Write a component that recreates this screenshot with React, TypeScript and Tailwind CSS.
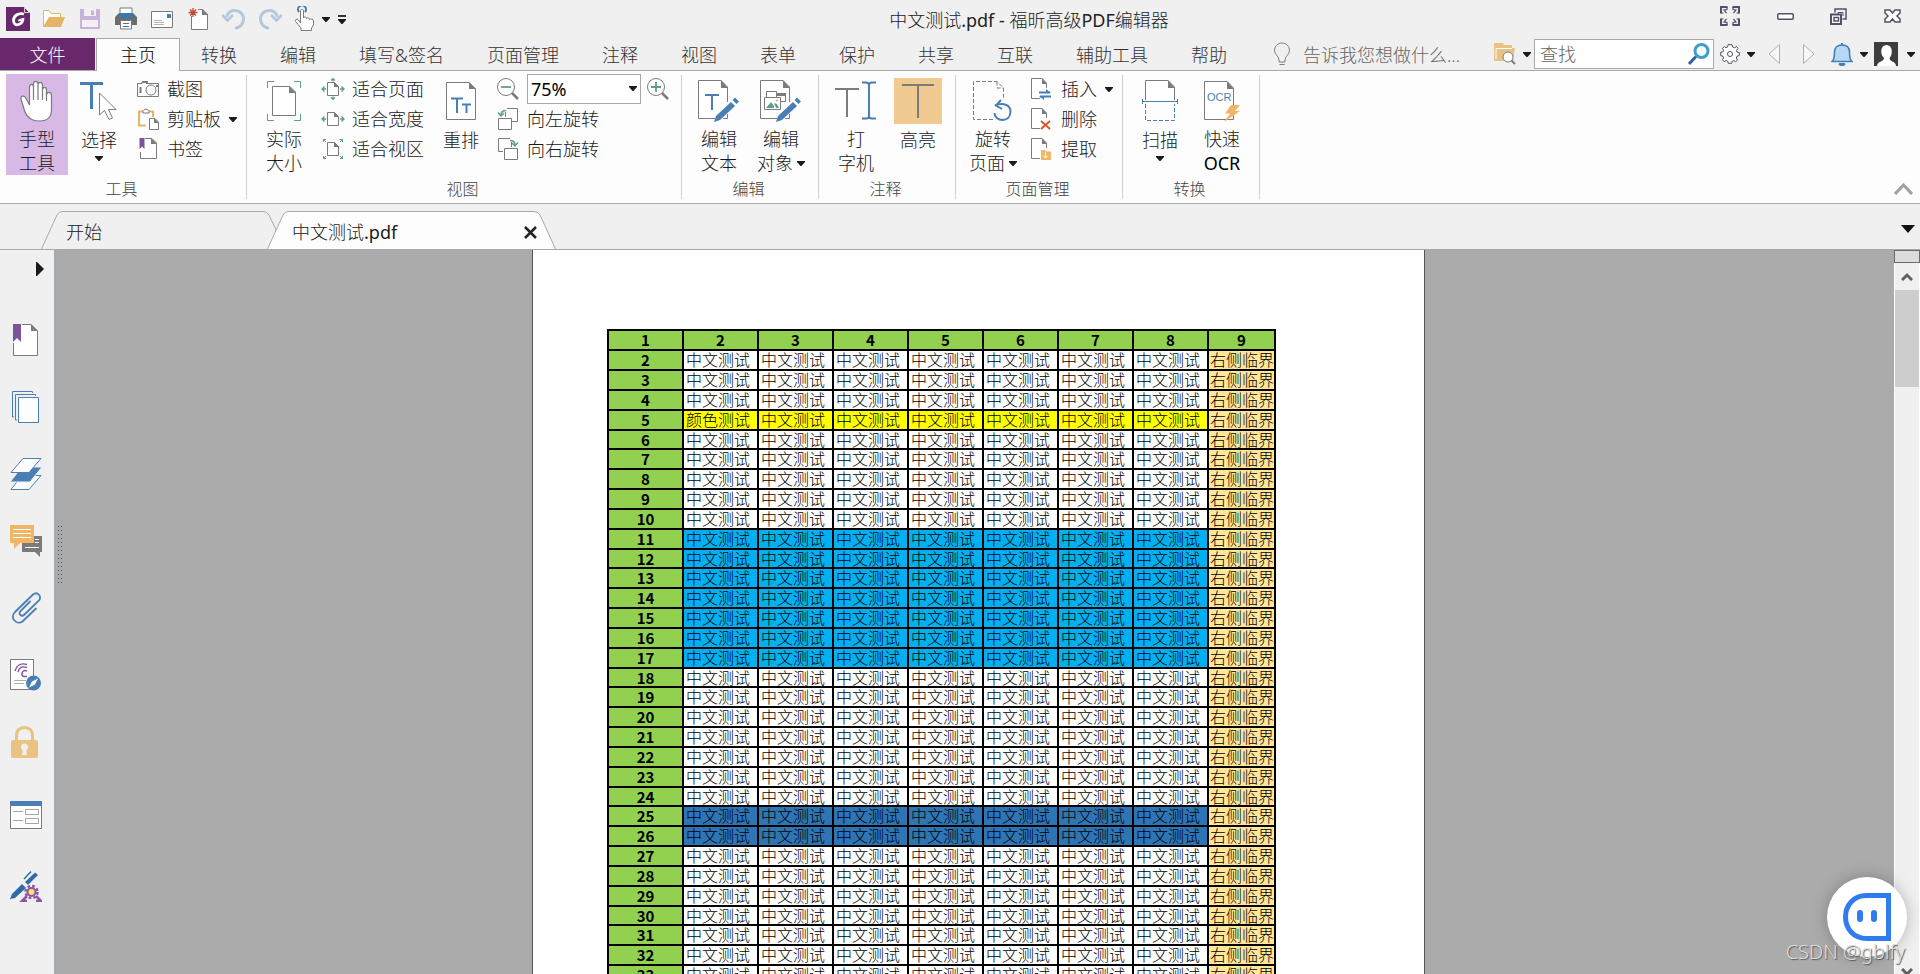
import type { ReactNode } from 'react'

const GRAY = '#7b7b7b'
const BLUE = '#4a7fb5'
const GREEN = '#5f9f88'
const PURPLE = '#7d5499'
const ORANGE = '#f0b665'

function Svg({ w, h, className = '', children }: { w: number; h: number; className?: string; children: ReactNode }) {
  return (
    <svg width={w} height={h} viewBox={`0 0 ${w} ${h}`} fill="none" className={`shrink-0 ${className}`} aria-hidden="true">
      {children}
    </svg>
  )
}

function Caret({ className = '' }: { className?: string }) {
  return (
    <Svg w={8} h={5} className={className}>
      <path d="M0 0H8V1L4.500 5H3.500L0 1Z" fill="#1a1a1a" />
    </Svg>
  )
}

/* ---------- quick access icons ---------- */

const LogoIcon = () => (
  <Svg w={24} h={24}>
    <path d="M0 0H18L24 6V24H0Z" fill="#68286b" />
    <path d="M18.500 0.500V5.500H23.500Z" fill="#68286b" stroke="#f0f0f0" strokeWidth="0.800" />
    <path d="M18 7C12 5.500 7.500 9 7.500 13.500C7.500 17 10 18.500 12.500 17.500C15.500 16.500 17 14 17 11.500" stroke="#fff" strokeWidth="2.800" />
    <path d="M18.500 10.500L12.500 12.500L12 14.500L17 13.500Z" fill="#fff" />
  </Svg>
)
const OpenIcon = () => (
  <Svg w={24} h={24}>
    <path d="M1.500 19V3.500H7L9 6.500H18.500V10" stroke="#e5b567" fill="#fff" />
    <path d="M1 20L7 10H23L19 20Z" fill="#e5b567" />
  </Svg>
)
const SaveIcon = () => (
  <Svg w={24} h={24}>
    <path d="M2 2H22V22H2Z" fill="#c9b3d5" />
    <path d="M6 2H18V9H6Z" fill="#f4eef7" />
    <path d="M13 3.500H16V8H13Z" fill="#c9b3d5" />
    <path d="M4 13H20V20H4Z" fill="#f4eef7" />
  </Svg>
)
const PrintIcon = () => (
  <Svg w={24} h={24}>
    <path d="M6 1H18V7H6Z" fill="#fff" stroke={GRAY} />
    <path d="M1 10L5 6H19L23 10V18H1Z" fill="#6c6c6c" />
    <path d="M5 6H19V11H5Z" fill="#3a78ad" />
    <path d="M6.500 13.500H17.500V22H6.500Z" fill="#fff" stroke={GRAY} />
    <path d="M9 16.500H15M9 19.500H15" stroke="#3a78ad" />
  </Svg>
)
const MailIcon = () => (
  <Svg w={24} h={24}>
    <path d="M1.500 4.500H22.500V20.500H1.500Z" fill="#fff" stroke={GRAY} />
    <path d="M17 7H21V11H17Z" fill={BLUE} />
    <path d="M4 13.500H12M4 15.500H14M4 17.500H14" stroke="#b5b5b5" />
  </Svg>
)
const NewIcon = () => (
  <Svg w={24} h={24}>
    <path d="M5.500 9V22.500H21.500V7L16.500 2.500H12" fill="#fff" stroke={GRAY} />
    <path d="M16 2L22 8H16Z" fill={GRAY} />
    <path d="M7 1V10M2.500 5.500H11.500M4 2.500L10 8.500M10 2.500L4 8.500" stroke="#c5492c" strokeWidth="1.300" />
  </Svg>
)
const UndoIcon = ({ flip = false }: { flip?: boolean }) => (
  <Svg w={24} h={24} className={flip ? '-scale-x-100' : ''}>
    <path d="M4.500 10C6 5 9.500 3 13.500 3.500C18.500 4 22 8 21.500 12.500C21 17.500 17.500 21 13 21" stroke="#b3c8dc" strokeWidth="3" />
    <path d="M0 8L5.500 13.500L11 8" stroke="#b3c8dc" strokeWidth="2.500" />
  </Svg>
)
const TouchIcon = () => (
  <Svg w={22} h={26}>
    <path d="M5 6A4 4 0 1 1 11 6" stroke={BLUE} strokeWidth="2" />
    <path d="M6.500 17V5C6.500 3 9.500 3 9.500 5V12C10 10.500 12.500 10.500 12.500 12.500C13 11.500 15.500 11.500 15.500 13.500C16.500 12.500 19.500 13 19.500 15V19L17.500 22V24.500H7V22L1.500 15.500C0.500 13.500 3 12.500 4 13.500Z" fill="#fff" stroke={GRAY} />
  </Svg>
)

/* ---------- ribbon icons ---------- */

const HandIcon = () => (
  <Svg w={34} h={42}>
    <path d="M13 40C8 38 5 33 4 29L1 19C0.500 16 4 15 5.500 17.500L9.500 25V7C9.500 3.500 13.500 3.500 13.500 7V4C13.500 0.500 18 0.500 18 4V5C18 1.500 22.500 1.500 22.500 5V10C22.500 6.500 26.500 6.500 26.500 10V15C26.500 11.500 31.500 11.500 31.500 15V30C31.500 38 26 41 20 41C17 41 15 41 13 40Z" fill="#fff" stroke={GRAY} strokeWidth="1.200" />
    <path d="M13.500 7V20M18 5V20M22.500 7V20M26.500 12V21" stroke={GRAY} strokeWidth="1.200" />
  </Svg>
)
const SelectIcon = () => (
  <Svg w={38} h={40}>
    <path d="M0 2.500H23" stroke={BLUE} strokeWidth="3" />
    <path d="M11.500 2V28" stroke={BLUE} strokeWidth="3" />
    <path d="M19.500 12V34L24.500 29.500L29 38.500L32.500 37L28.500 28.500H36Z" fill="#fff" stroke={GRAY} />
  </Svg>
)
const CameraIcon = () => (
  <Svg w={22} h={18}>
    <path d="M0.500 3.500H5V2H9V3.500H21.500V16.500H0.500Z" fill="#fff" stroke={GRAY} />
    <path d="M5 1H11V3H5Z" fill={GRAY} />
    <path d="M3.500 7V13" stroke={GRAY} strokeWidth="2" />
    <circle cx="14" cy="10" r="5" fill="#fff" stroke={GRAY} />
    <path d="M19 6H21" stroke={GRAY} strokeWidth="2" />
  </Svg>
)
const ClipboardIcon = () => (
  <Svg w={22} h={22}>
    <path d="M9 17.500H2V3.500H16V9" stroke="#e5b567" strokeWidth="2" />
    <path d="M6 3.500C6 0.500 12 0.500 12 3.500V5H6Z" fill="#fff" stroke={GRAY} />
    <path d="M12.500 10.500H18L21.500 14V21.500H12.500Z" fill="#fff" stroke={GRAY} />
    <path d="M17 10L22 15H17Z" fill={GRAY} />
  </Svg>
)
const BookmarkIcon = () => (
  <Svg w={20} h={22}>
    <path d="M2.500 14V20.500H18.500V5L14 0.500H7" fill="#fff" stroke={GRAY} />
    <path d="M13 0L19 6H13Z" fill={GRAY} />
    <path d="M1.500 0H6.500V11L4 8.500L1.500 11Z" fill={PURPLE} />
  </Svg>
)
const ActualSizeIcon = () => (
  <Svg w={34} h={40}>
    <path d="M0.500 7V0.500H7M27 0.500H33.500V7M33.500 33V39.500H27M7 39.500H0.500V33" stroke={GREEN} />
    <path d="M5.500 5.500H23L28.500 11V34.500H5.500Z" fill="#fff" stroke={GRAY} />
    <path d="M22 5L29 12H22Z" fill={GRAY} />
  </Svg>
)
const FitIcon = ({ kind }: { kind: 'page' | 'width' | 'view' }) => (
  <Svg w={24} h={22}>
    <path d="M6.500 4.500H13.500L17.500 8.500V17.500H6.500Z" fill="#fff" stroke={GRAY} />
    <path d="M13 4L18 9H13Z" fill={GRAY} />
    {kind !== 'view' && <path d="M1 11H5M3.500 8.500L1 11L3.500 13.500M19 11H23M20.500 8.500L23 11L20.500 13.500" stroke={GREEN} strokeWidth="1.400" />}
    {kind === 'page' && <path d="M12 0.500V3.500M10 2.500L12 0.500L14 2.500M12 18.500V21.500M10 19.500L12 21.500L14 19.500" stroke={GREEN} strokeWidth="1.200" />}
    {kind === 'view' && (
      <path d="M2.500 4V1.500H5M2.500 1.500L5 4M18.500 1.500H21.500V4M21.500 1.500L19 4M21.500 18V20.500H19M21.500 20.500L19 18M5 20.500H2.500V18M2.500 20.500L5 18" stroke={GREEN} />
    )}
  </Svg>
)
const ReflowIcon = () => (
  <Svg w={30} h={40}>
    <path d="M0.500 1.500H23L29.500 8V38.500H0.500Z" fill="#fff" stroke={GRAY} />
    <path d="M23 1L30 8H23Z" fill={GRAY} />
    <path d="M5 17.500H17M11 17V32M16 23.500H25M20.500 23V32" stroke={BLUE} strokeWidth="2" />
  </Svg>
)
const ZoomIcon = ({ plus = false }: { plus?: boolean }) => (
  <Svg w={22} h={22}>
    <path d="M15 15L21 21" stroke={GRAY} strokeWidth="2.500" />
    <circle cx="9" cy="9" r="8.500" fill="#fff" stroke={GRAY} />
    <path d={plus ? 'M4 9H14M9 4V14' : 'M4 9H14'} stroke={GREEN} strokeWidth="1.800" />
  </Svg>
)
const RotateLeftIcon = () => (
  <Svg w={22} h={22}>
    <path d="M10 0.500H20.500V13.500H15" stroke={GRAY} />
    <path d="M8.500 4V9" stroke={GRAY} />
    <path d="M1.500 10.500H14.500V21.500H1.500Z" fill="#fff" stroke={GRAY} />
    <path d="M4 7C4 4 5.500 2.500 9 2.500M1 4.500L4 8L7 5" stroke={GREEN} strokeWidth="1.500" />
  </Svg>
)
const RotateRightIcon = () => (
  <Svg w={22} h={22}>
    <path d="M6 13.500H1.500V0.500H13" stroke={GRAY} />
    <path d="M14.500 4V9" stroke={GRAY} />
    <path d="M7.500 10.500H20.500V21.500H7.500Z" fill="#fff" stroke={GRAY} />
    <path d="M13 2.500C16 2.500 18 4 18 7M15 5L18 8L21 4.500" stroke={GREEN} strokeWidth="1.500" />
  </Svg>
)
const Pencil = () => (
  <>
    <path d="M16 42L18 36L33 22L37 26L22 40Z" fill={BLUE} />
    <path d="M34.500 20L37 17.500L41 21.500L38.500 24Z" fill={BLUE} />
  </>
)
const EditTextIcon = () => (
  <Svg w={42} h={42}>
    <path d="M17 38.500H0.500V0.500H23L29.500 7V22M29.500 34V38.500H25" fill="#fff" stroke={GRAY} />
    <path d="M23 0L30 8H23Z" fill={GRAY} />
    <path d="M7 15H21M14 15V30" stroke={BLUE} strokeWidth="2" />
    <Pencil />
  </Svg>
)
const EditObjectIcon = () => (
  <Svg w={42} h={42}>
    <path d="M17 38.500H0.500V0.500H23L29.500 7V22M29.500 34V38.500H25" fill="#fff" stroke={GRAY} />
    <path d="M23 0L30 8H23Z" fill={GRAY} />
    <path d="M16.500 13.500H25.500V21.500H16.500ZM6.500 11.500H16.500V18H6.500Z" fill="#fff" stroke={GRAY} />
    <path d="M16 13H26V16H16Z" fill={GRAY} />
    <path d="M4.500 17.500H20.500V29.500H4.500Z" fill="#fff" stroke={GRAY} />
    <path d="M6 28L11 22L14 26V28ZM14 23L17 24L19 28H16Z" fill={GREEN} />
    <path d="M16 19.500H18V21.500H16Z" fill={ORANGE} />
    <Pencil />
  </Svg>
)
const TypewriterIcon = () => (
  <Svg w={42} h={40}>
    <path d="M0 8H24M12 8V36" stroke={GRAY} strokeWidth="2" />
    <path d="M27 1.500H32M36 1.500H41M27 37.500H32M36 37.500H41M31 1.500Q34 1.500 34 4V35Q34 37.500 31 37.500M37 1.500Q34 1.500 34 4M34 35Q34 37.500 37 37.500" stroke={BLUE} strokeWidth="2" />
  </Svg>
)
const HighlightIcon = () => (
  <Svg w={48} h={46}>
    <path d="M0 0H48V46H0Z" fill="#f0ca90" />
    <path d="M8 7H40M24 7V40" stroke={GRAY} strokeWidth="2" />
  </Svg>
)
const RotatePagesIcon = () => (
  <Svg w={40} h={42}>
    <path d="M20 39.500H0.500V1.500H24L30.500 8V20M24 1.500V8H30.500" stroke={GRAY} strokeDasharray="4 2" />
    <path d="M22 25.500C30 22 37.500 25 37.500 31.500C37.500 37 34 40 29.500 40C25 40 21.500 37 21.500 33" stroke={BLUE} strokeWidth="2" />
    <path d="M28 20L23 25.500L29 29" stroke={BLUE} strokeWidth="2" />
  </Svg>
)
const PageBase = () => (
  <>
    <path d="M9 20.500H0.500V0.500H11L15.500 5V10" fill="#fff" stroke={GRAY} />
    <path d="M11 0L16 6H11Z" fill={GRAY} />
  </>
)
const InsertIcon = () => (
  <Svg w={22} h={22}>
    <PageBase />
    <path d="M8 14.500H19M9 18.500H20" stroke={BLUE} strokeWidth="2" />
    <path d="M15 11L20 15H15ZM13 22L8 18H13Z" fill={BLUE} />
  </Svg>
)
const DeleteIcon = () => (
  <Svg w={22} h={22}>
    <PageBase />
    <path d="M10 13L19 21M19 13L10 21" stroke="#d35733" strokeWidth="2" />
  </Svg>
)
const ExtractIcon = () => (
  <Svg w={22} h={22}>
    <PageBase />
    <path d="M10 12H14L15 13.500H20V22H10Z" fill={ORANGE} />
    <path d="M14.500 14V20M12 17.500L14.500 20L17 17.500" stroke="#fff" />
  </Svg>
)
const ScanIcon = () => (
  <Svg w={36} h={42}>
    <path d="M3.500 20V0.500H26L32.500 7V20" fill="#fff" stroke={GRAY} />
    <path d="M26 0L33 8H26Z" fill={GRAY} />
    <path d="M0.500 19V24M35.500 19V24M0 21.500H36" stroke={BLUE} />
    <path d="M3.500 24V40.500H32.500V24" stroke={BLUE} strokeDasharray="4 2" />
  </Svg>
)
const OcrIcon = () => (
  <Svg w={36} h={42}>
    <path d="M0.500 1.500H23L29.500 8V39.500H0.500Z" fill="#fff" stroke={GRAY} />
    <path d="M23 1L30 9H23Z" fill={GRAY} />
    <text x="3" y="21" fontSize="11" fontWeight="400" fontFamily="Liberation Sans, sans-serif" fill={BLUE}>OCR</text>
    <path d="M27 25H36L31 31H36L20 42L26 33.500H21Z" fill={ORANGE} />
  </Svg>
)

/* ---------- ribbon building blocks ---------- */

function BigButton({ icon, lines, className = '', caret = false, active = false }: { icon: ReactNode; lines: string[]; className?: string; caret?: boolean; active?: boolean }) {
  return (
    <button className={`flex h-[101px] flex-col items-center ${active ? 'bg-[#d8b9e6]' : ''} ${className}`}>
      <span className="flex h-[54px] items-center justify-center">{icon}</span>
      {lines.map((line, i) => (
        <span key={line} className={`flex h-6 items-center gap-1 whitespace-nowrap leading-6 ${line === 'OCR' ? 'font-normal text-black' : ''}`}>
          {line}
          {caret && i === 1 && <Caret />}
        </span>
      ))}
      {caret && lines.length === 1 && <Caret className="mt-1" />}
    </button>
  )
}

function SmallButton({ icon, label, caret = false }: { icon: ReactNode; label: string; caret?: boolean }) {
  return (
    <button className="flex h-[30px] items-center whitespace-nowrap">
      <span className="mr-2 flex w-[22px] justify-center">{icon}</span>
      {label}
      {caret && <Caret className="ml-2" />}
    </button>
  )
}

function Group({ label, className, children }: { label: string; className: string; children: ReactNode }) {
  return (
    <section className={`my-1 flex flex-col border-r border-[#d0d0d0] ${className}`} aria-label={label}>
      <div className="-mt-px flex h-[101px]">{children}</div>
      <div className="pt-0.5 pr-[3px] text-center text-base leading-6 text-[#444]">{label}</div>
    </section>
  )
}

const MENU = ['转换', '编辑', '填写&签名', '页面管理', '注释', '视图', '表单', '保护', '共享', '互联', '辅助工具', '帮助']

function TitleBar() {
  return (
    <header className="flex h-[38px] shrink-0 items-start">
      <div className="flex h-8 w-[347px] items-center gap-3 pt-1.5 pl-1.5">
        <button aria-label="Foxit"><LogoIcon /></button>
        <button aria-label="打开"><OpenIcon /></button>
        <button aria-label="保存"><SaveIcon /></button>
        <button aria-label="打印"><PrintIcon /></button>
        <button aria-label="邮件"><MailIcon /></button>
        <button aria-label="新建"><NewIcon /></button>
        <button aria-label="撤销"><UndoIcon /></button>
        <button aria-label="重做"><UndoIcon flip /></button>
        <button aria-label="手型" className="flex items-center gap-1.5"><TouchIcon /><Caret /></button>
        <button aria-label="自定义" className="-ml-1">
          <Svg w={8} h={9}>
            <path d="M0 0H8V2H0Z" fill="#333" />
            <path d="M0 4H8V5L4.500 9H3.500L0 5Z" fill="#1a1a1a" />
          </Svg>
        </button>
      </div>
      <h1 className="flex-1 pt-2 text-center leading-6 text-[#222]">
        中文测试<span className="font-normal">.pdf - </span>福昕高级<span className="font-normal">PDF</span>编辑器
      </h1>
      <div className="flex h-8 w-[209px] items-center justify-between pr-[19px] pl-[9px]">
        <button aria-label="全屏">
          <Svg w={20} h={20}>
            <path d="M1 7.500V1H7.500M12.500 1H19V7.500M1 12.500V19H7.500M12.500 19H19V12.500" stroke="#4f5266" strokeWidth="2" />
            <path d="M1 7H3.500M7 1V3.500L4 4L6.500 7M19 7H16.500M13 1V3.500L16 4L13.500 7M1 13H3.500M7 19V16.500L4 16L6.500 13M19 13H16.500M13 19V16.500L16 16L13.500 13" stroke="#4f5266" strokeWidth="1.200" />
          </Svg>
        </button>
        <button aria-label="最小化">
          <Svg w={17} h={7}><rect x="0.750" y="0.750" width="15.500" height="5.500" rx="1" fill="#fff" stroke="#4f5266" strokeWidth="1.500" /></Svg>
        </button>
        <button aria-label="还原">
          <Svg w={17} h={17}>
            <path d="M5 4.500V1H16V11H12.500" stroke="#4f5266" strokeWidth="1.500" />
            <path d="M8 6V4.500H13V8" stroke="#4f5266" />
            <path d="M1 6.500H11V16H1Z" fill="#fff" stroke="#4f5266" strokeWidth="2" />
            <path d="M4 9.500H8.500V13H4Z" fill="#fff" stroke="#4f5266" strokeWidth="1.500" />
          </Svg>
        </button>
        <button aria-label="关闭">
          <Svg w={17} h={14}>
            <path d="M1 1H6L8.500 4L11 1H16V4L13 7L16 10V13H11L8.500 10L6 13H1V10L4 7L1 4Z" fill="#fff" stroke="#4f5266" strokeWidth="1.500" />
          </Svg>
        </button>
      </div>
    </header>
  )
}

function MenuBar() {
  return (
    <nav className="flex h-8 shrink-0 text-[#333]">
      <button className="w-[95px] bg-[#68286b] pt-0.5 text-white">文件</button>
      <button className="relative z-10 -mb-px ml-px w-[84px] border border-b-0 border-[#a8a8a8] bg-[#fdfdfd] text-black">主页</button>
      {MENU.map((item) => (
        <button key={item} className="pt-0.5 pr-[22px] pl-[21px] whitespace-nowrap">{item}</button>
      ))}
      <label className="ml-6 flex flex-1 items-center gap-3">
        <Svg w={18} h={24}>
          <path d="M6 18C6 14 1.500 13 1.500 8.500C1.500 4 5 1 9 1C13 1 16.500 4 16.500 8.500C16.500 13 12 14 12 18V20H6Z" stroke={GRAY} />
          <path d="M6.500 22.500H11.500" stroke={GRAY} />
        </Svg>
        <input className="w-44 bg-transparent pt-0.5 outline-none placeholder:text-[#666]" placeholder="告诉我您想做什么..." aria-label="告诉我您想做什么" />
      </label>
      <div className="flex items-center pr-[5px]">
        <button aria-label="查找文件夹" className="flex items-center gap-[7px]">
          <Svg w={22} h={22}>
            <path d="M0 0H9L10 2H18V5H21L19 18H0Z" fill="#e9c385" />
            <path d="M2 16V5.500H18" stroke="#fff" />
            <circle cx="14" cy="14" r="5" fill="#fff" stroke={GRAY} />
            <path d="M17.500 17.500L21 21" stroke={GRAY} strokeWidth="2" />
          </Svg>
          <Caret />
        </button>
        <div className="ml-[3px] flex h-[30px] w-[180px] items-center border border-[#a8a8a8] bg-white pr-[3px] pl-[5px]">
          <input className="w-0 flex-1 outline-none placeholder:text-[#666]" placeholder="查找" aria-label="查找" />
          <button aria-label="搜索">
            <Svg w={22} h={22}>
              <path d="M1 21L8 13.500" stroke="#3b5f9e" strokeWidth="3" />
              <circle cx="13.500" cy="8" r="6.500" fill="#f7fcff" stroke="#419ec9" strokeWidth="3" />
            </Svg>
          </button>
        </div>
        <button aria-label="设置" className="ml-1.5 flex items-center gap-[7px]">
          <Svg w={20} h={20}>
            <path d="M8 0.700H12L12.500 3L14.500 3.800L16.500 2.500L18 4.500L16.500 6.300L17 8L19.300 8.500V11.500L17 12.200L16.300 14L17.500 16L15.500 17.700L13.700 16.500L12.300 17.200L11.700 19.300H8.300L7.700 17.200L6 16.500L4.200 17.700L2.500 15.700L3.600 14L3 12.200L0.700 11.700V8.300L3 7.800L3.700 6.200L2.400 4.300L4.400 2.500L6 3.700L7.600 3Z" fill="#fff" stroke="#4f5266" />
            <circle cx="10" cy="10" r="2.500" stroke="#4f5266" />
          </Svg>
          <Caret />
        </button>
        <button aria-label="上一个" className="ml-[13px]">
          <Svg w={12} h={20}><path d="M11.500 0.500V19.500L1 10Z" fill="#f7f7f7" stroke="#b0b0b0" /></Svg>
        </button>
        <button aria-label="下一个" className="ml-[23px]">
          <Svg w={12} h={20}><path d="M0.500 0.500V19.500L11 10Z" fill="#f7f7f7" stroke="#b0b0b0" /></Svg>
        </button>
        <button aria-label="通知" className="ml-4 flex items-center gap-[7px]">
          <Svg w={22} h={24}>
            <path d="M1 19.500C3 18 3.500 16 3.500 10C3.500 5.500 6.500 3 11 3C15.500 3 18.500 5.500 18.500 10C18.500 16 19 18 21 19.500Z" fill="#b5d8f5" stroke="#4480b8" strokeWidth="1.600" />
            <path d="M11 1V3M8 22H14L11 23.500Z" stroke="#4480b8" strokeWidth="2" />
          </Svg>
          <Caret />
        </button>
        <button aria-label="账户" className="ml-1.5 flex items-center gap-[9px]">
          <Svg w={24} h={24}>
            <path d="M0 0H24V24H0Z" fill="#3d3d3d" />
            <path d="M3 24C3 19 10 20 10 16C6 13 6 3 12.500 3C19 3 19 13 15.500 16C15.500 20 22 19 22 24Z" fill="#fff" />
          </Svg>
          <Caret />
        </button>
      </div>
    </nav>
  )
}

function Ribbon() {
  return (
    <div className="flex h-[134px] shrink-0 border-y border-[#a8a8a8] bg-[#fdfdfd] text-[#1a1a1a]">
      <Group label="工具" className="w-[247px]">
        <BigButton icon={<HandIcon />} lines={['手型', '工具']} className="ml-1.5 w-[62px]" active />
        <BigButton icon={<SelectIcon />} lines={['选择']} className="w-[62px]" caret />
        <div className="ml-[7px] flex flex-col">
          <SmallButton icon={<CameraIcon />} label="截图" />
          <SmallButton icon={<ClipboardIcon />} label="剪贴板" caret />
          <SmallButton icon={<BookmarkIcon />} label="书签" />
        </div>
      </Group>
      <Group label="视图" className="w-[435px]">
        <BigButton icon={<ActualSizeIcon />} lines={['实际', '大小']} className="ml-1.5 w-[62px]" />
        <div className="ml-[7px] flex flex-col">
          <SmallButton icon={<FitIcon kind="page" />} label="适合页面" />
          <SmallButton icon={<FitIcon kind="width" />} label="适合宽度" />
          <SmallButton icon={<FitIcon kind="view" />} label="适合视区" />
        </div>
        <BigButton icon={<ReflowIcon />} lines={['重排']} className="ml-1.5 w-[62px]" />
        <div className="ml-[5px] flex flex-col">
          <div className="flex h-[30px] items-center gap-1.5">
            <button aria-label="缩小"><ZoomIcon /></button>
            <div className="relative ml-0.5">
              <select aria-label="缩放" className="h-[30px] w-[114px] appearance-none border border-[#a8a8a8] bg-white pl-[3px] font-normal text-black">
                <option>75%</option>
              </select>
              <Caret className="pointer-events-none absolute top-3 right-1" />
            </div>
            <button aria-label="放大"><ZoomIcon plus /></button>
          </div>
          <SmallButton icon={<RotateLeftIcon />} label="向左旋转" />
          <SmallButton icon={<RotateRightIcon />} label="向右旋转" />
        </div>
      </Group>
      <Group label="编辑" className="w-[137px]">
        <BigButton icon={<EditTextIcon />} lines={['编辑', '文本']} className="ml-1.5 w-[62px]" />
        <BigButton icon={<EditObjectIcon />} lines={['编辑', '对象']} className="w-[62px]" caret />
      </Group>
      <Group label="注释" className="w-[137px]">
        <BigButton icon={<TypewriterIcon />} lines={['打', '字机']} className="ml-1.5 w-[62px]" />
        <BigButton icon={<HighlightIcon />} lines={['高亮']} className="w-[62px]" />
      </Group>
      <Group label="页面管理" className="w-[167px]">
        <BigButton icon={<RotatePagesIcon />} lines={['旋转', '页面']} className="ml-1.5 w-[62px]" caret />
        <div className="ml-[7px] flex flex-col">
          <SmallButton icon={<InsertIcon />} label="插入" caret />
          <SmallButton icon={<DeleteIcon />} label="删除" />
          <SmallButton icon={<ExtractIcon />} label="提取" />
        </div>
      </Group>
      <Group label="转换" className="w-[137px]">
        <BigButton icon={<ScanIcon />} lines={['扫描']} className="ml-1.5 w-[62px]" caret />
        <BigButton icon={<OcrIcon />} lines={['快速', 'OCR']} className="w-[62px]" />
      </Group>
      <button aria-label="折叠功能区" className="mt-auto mr-[7px] mb-2 ml-auto">
        <Svg w={19} h={12}><path d="M1 11L9.500 2L18 11" stroke="#a0a0a0" strokeWidth="3" /></Svg>
      </button>
    </div>
  )
}

function DocTabs() {
  return (
    <div className="flex h-[46px] shrink-0 items-end border-b border-[#a8a8a8] pl-[41px] text-[#1a1a1a]">
      <button className="relative flex h-[38px] w-[244px] items-center pt-1 pl-[25px]">
        <svg className="absolute inset-0" width="244" height="38" fill="none" aria-hidden="true">
          <path d="M0.500 38L16 4Q18 0.500 21 0.500H222Q226 0.500 228 4L244 38" stroke="#a8a8a8" />
        </svg>
        <span className="relative">开始</span>
      </button>
      <div className="relative -ml-[18px] flex h-[38px] w-[289px] items-center justify-between pt-1 pr-[19px] pl-[25px]">
        <svg className="absolute inset-0" width="289" height="38" fill="none" aria-hidden="true">
          <path d="M0.500 38L16 4Q18 0.500 21 0.500H267Q271 0.500 273 4L288.500 38" fill="#fdfdfd" stroke="#a8a8a8" />
        </svg>
        <button className="relative">中文测试<span className="font-normal">.pdf</span></button>
        <button className="relative" aria-label="关闭标签">
          <Svg w={13} h={13}><path d="M1 1L12 12M12 1L1 12" stroke="#222" strokeWidth="2.500" /></Svg>
        </button>
      </div>
      <button aria-label="标签列表" className="mr-[5px] mb-4 ml-auto">
        <Svg w={14} h={8}><path d="M0 0H14L7 8Z" fill="#111" /></Svg>
      </button>
    </div>
  )
}

const NAV: { label: string; icon: ReactNode }[] = [
  {
    label: '书签',
    icon: (
      <>
        <path d="M3.500 19V31.500H27.500V7L21 0.500H12" fill="#fff" stroke={GRAY} />
        <path d="M21 0L28 7H21Z" fill={GRAY} />
        <path d="M3 0H11V18L7 14L3 18Z" fill={PURPLE} />
      </>
    ),
  },
  {
    label: '页面',
    icon: (
      <>
        <path d="M4 26H2.500V0.500H22.500V2M7 29H5.500V3.500H25.500V5" stroke={BLUE} />
        <path d="M8.500 6.500H28.500V31.500H8.500Z" fill="#fff" stroke={BLUE} />
      </>
    ),
  },
  {
    label: '图层',
    icon: (
      <>
        <path d="M1 31.500L12 17.500H31L19 31.500Z" fill="#fff" stroke={BLUE} />
        <path d="M0 24L12 9H32L20 24Z" fill={BLUE} stroke="#f0f0f0" />
        <path d="M1 14.500L13 0.500H31L19 14.500Z" fill="#fff" stroke={BLUE} />
      </>
    ),
  },
  {
    label: '注释',
    icon: (
      <>
        <path d="M12 11H32V27H30V32L25 27H12Z" fill={GRAY} />
        <path d="M15 22.500H29M25 17.500H29M25 14.500H29" stroke="#fff" />
        <path d="M0 0H24V18H10L4 24V18H0Z" fill={ORANGE} />
        <path d="M3 4.500H21M3 8.500H21M3 12.500H21" stroke="#fff" />
      </>
    ),
  },
  {
    label: '附件',
    icon: <path d="M20 9.500L10.500 19C8 22 11.500 25.500 14.500 22.500L28.500 9C32.500 4.500 27.500 -1 23 2.500L5 20C-0.500 26 6.500 33.500 12.500 29.500L26 16.500" stroke={BLUE} strokeWidth="1.800" strokeLinecap="round" />,
  },
  {
    label: '签名',
    icon: (
      <>
        <path d="M0.500 0.500H23.500V30.500H0.500Z" fill="#fff" stroke={GRAY} />
        <path d="M4 21.500H16M4 24.500H14" stroke="#b0b0b0" />
        <path d="M17 12C12 10 10 17 14 17.500H17M8 13C9 8 12 7 17 8.500M5 12C7 5 11 4 17 5.500" stroke={PURPLE} strokeWidth="1.400" />
        <circle cx="23.500" cy="24" r="7.500" fill={BLUE} />
        <path d="M19 28.500L22 22.500L28 19.500L25 25.500Z" fill="#fff" />
      </>
    ),
  },
  {
    label: '安全',
    icon: (
      <>
        <path d="M6.500 14V9C6.500 -1 22.500 -1 22.500 9V14" stroke="#eac282" strokeWidth="3" />
        <rect x="1" y="14" width="27" height="18" rx="2" fill="#eac282" />
        <circle cx="14.500" cy="21" r="3.500" fill="#f0f0f0" />
        <path d="M13 22H16L17 29H12Z" fill="#f0f0f0" />
      </>
    ),
  },
  {
    label: '表单域',
    icon: (
      <>
        <path d="M0.500 3H31.500V29.500H0.500Z" fill="#fff" stroke={GRAY} />
        <path d="M0 2H32V7H0Z" fill={BLUE} />
        <path d="M3 12.500H13M3 21.500H13M15.500 10.500H28.500V15.500H15.500ZM15.500 19.500H28.500V24.500H15.500Z" stroke="#a5a5a5" />
      </>
    ),
  },
  {
    label: '数字签名',
    icon: (
      <>
        <path d="M0 29L2 24L12 14L16 18L5 28Z" fill="#2f6ca5" />
        <path d="M15 12L25 2.500L28 5L18 15Z" fill="#2f6ca5" />
        <path d="M14 9L21 1.500" stroke="#2f6ca5" strokeWidth="1.500" />
        <path d="M17 26L12 31H17M26 26L31 31H26" stroke="#8a55a5" strokeWidth="2.500" />
        <circle cx="21.500" cy="22" r="6" stroke="#8a55a5" strokeWidth="2.500" strokeDasharray="2.700 2" />
        <circle cx="21.500" cy="22" r="4" fill="#ffe06b" stroke="#8a55a5" strokeWidth="2" />
      </>
    ),
  },
]

function Sidebar() {
  return (
    <aside className="flex w-[54px] shrink-0 flex-col">
      <button aria-label="展开导航" className="mt-3 mr-2.5 mb-[30px] self-end">
        <Svg w={8} h={14}><path d="M0 0H1L8 7L1 14H0Z" fill="#1a1a1a" /></Svg>
      </button>
      {NAV.map(({ label, icon }, i) => (
        <button key={label} aria-label={label} className={`flex shrink-0 items-center pl-2.5 ${i === 7 ? 'mt-1' : ''} ${i > 6 ? 'h-[71px]' : 'h-[67px]'}`}>
          <Svg w={32} h={32}>{icon}</Svg>
        </button>
      ))}
    </aside>
  )
}

const COLUMNS = ['1', '2', '3', '4', '5', '6', '7', '8', '9']
const ROWS = Array.from({ length: 32 }, (_, i) => i + 2)

function rowColor(n: number) {
  if (n === 5) return 'bg-[#ffff00]'
  if (n >= 11 && n <= 17) return 'bg-[#00b0f0]'
  if (n === 25 || n === 26) return 'bg-[#2e75b6]'
  return 'bg-white'
}

function Sheet() {
  return (
    <table className="w-[668px] table-fixed border-collapse text-base leading-4 text-black">
      <colgroup>
        {COLUMNS.map((c) => (
          <col key={c} className={c === '9' ? 'w-[67px]' : 'w-[75px]'} />
        ))}
      </colgroup>
      <thead>
        <tr className="h-5">
          {COLUMNS.map((c) => (
            <th key={c} className="border-2 border-black bg-[#92d050] p-0 font-['Noto_Sans_CJK_SC',sans-serif] text-[15px] font-bold">{c}</th>
          ))}
        </tr>
      </thead>
      <tbody>
        {ROWS.map((n) => (
          <tr key={n} className={n % 6 === 0 ? 'h-[19px]' : 'h-5'}>
            <th className="border-2 border-black bg-[#92d050] p-0 font-['Noto_Sans_CJK_SC',sans-serif] text-[15px] font-bold">{n}</th>
            {COLUMNS.slice(1, 8).map((c) => (
              <td key={c} className={`overflow-hidden border-2 border-black py-0 pr-0 pl-0.5 whitespace-nowrap ${rowColor(n)}`}>
                {n === 5 && c === '2' ? '颜色测试' : '中文测试'}
              </td>
            ))}
            <td className="overflow-hidden border-2 border-black bg-[#ffe699] py-0 pr-0 pl-px whitespace-nowrap">右侧临界</td>
          </tr>
        ))}
      </tbody>
    </table>
  )
}

function ScrollBar() {
  return (
    <div className="flex w-[26px] shrink-0 flex-col bg-[#f0f0f0]">
      <div className="h-[13px] shrink-0 border border-[#6b6b6b] bg-[#dcdcdc]" />
      <div className="flex flex-1 flex-col border-x border-white">
        <button aria-label="向上滚动" className="flex h-[27px] shrink-0 items-center justify-center">
          <Svg w={12} h={9}><path d="M1 8L6 3L11 8" stroke="#606060" strokeWidth="3" /></Svg>
        </button>
        <div className="h-[97px] bg-[#cdcdcd]" />
        <button aria-label="向下滚动" className="mt-auto flex h-1.5 shrink-0 justify-center overflow-hidden">
          <Svg w={12} h={9}><path d="M1 1L6 6L11 1" stroke="#606060" strokeWidth="3" /></Svg>
        </button>
      </div>
    </div>
  )
}

export default function App() {
  return (
    <div className="relative flex h-screen flex-col overflow-hidden bg-[#f0f0f0] font-['Noto_Sans','Noto_Sans_CJK_SC',sans-serif] text-lg leading-6 font-light">
      <TitleBar />
      <MenuBar />
      <Ribbon />
      <DocTabs />
      <div className="flex min-h-0 flex-1 overflow-hidden">
        <Sidebar />
        <div className="w-[9px] shrink-0 bg-[#a8aaac]">
          <div className="mt-[276px] ml-1 grid w-1 grid-cols-2 gap-x-0.5 gap-y-[3px]">
            {Array.from({ length: 30 }, (_, i) => (
              <i key={i} className="size-px bg-[#555]" />
            ))}
          </div>
        </div>
        <main className="flex flex-1 justify-center overflow-hidden bg-[#ababab]">
          <div className="w-[893px] shrink-0 border-x border-[#555] bg-white pt-[79px] pl-[74px]">
            <Sheet />
          </div>
        </main>
        <ScrollBar />
      </div>
      <button aria-label="助手" className="absolute right-[13px] bottom-[17px] flex size-20 items-center justify-center rounded-full bg-white shadow-[0_0_16px_rgba(0,0,0,0.25)]">
        <Svg w={48} h={48}>
          <path d="M45.500 2.500V45.500H23.500C11 45.500 2.500 36 2.500 24C2.500 12 11 2.500 23.500 2.500Z" stroke="#2f7bf0" strokeWidth="5" />
          <path d="M17 20V26M31 20V26" stroke="#2f7bf0" strokeWidth="6" strokeLinecap="round" />
        </Svg>
      </button>
      <p className="pointer-events-none absolute right-[15px] bottom-2.5 text-xl leading-6 text-[#dedede] [text-shadow:1px_1px_1px_#555]">CSDN @gblfy</p>
    </div>
  )
}
